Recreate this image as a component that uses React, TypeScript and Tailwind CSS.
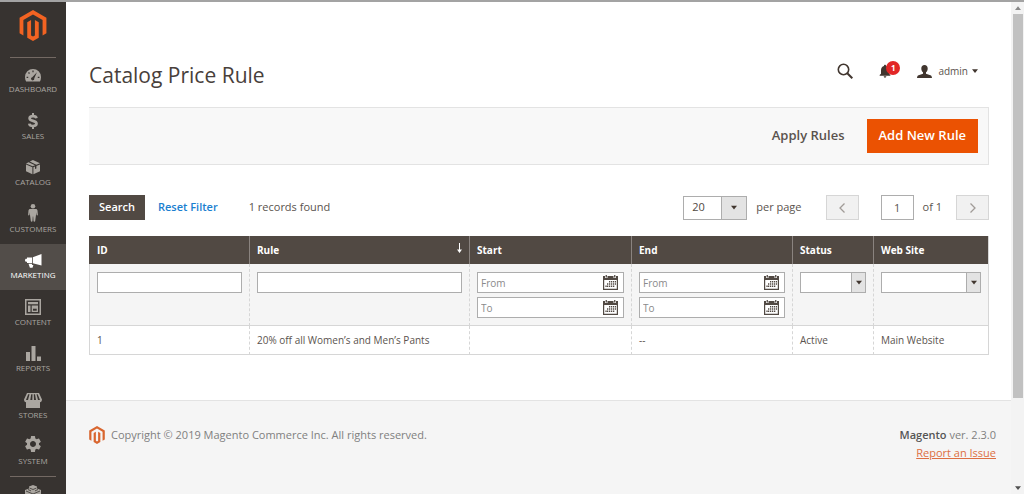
import type { ReactNode } from 'react';
import { FaMagento } from 'react-icons/fa';
import { MdNotifications, MdSettings } from 'react-icons/md';

const DashboardIcon = () => (
  <svg viewBox="0 0 16 13" className="w-4 h-[13px]" fill="currentColor">
    <path
      fillRule="evenodd"
      d="M8 0a8 8 0 0 0-8 8c0 1.700.4 3.200 1.100 4.500h13.800A9 9 0 0 0 16 8a8 8 0 0 0-8-8Zm3.900 3.200-2.700 6.200a1.600 1.600 0 1 1-1.900-1.200ZM7.400 1.600h1.200v1.600H7.400ZM3 3.900l.9-.9 1.100 1.100-.9.9ZM1.600 7.800h1.600V9H1.600Zm11.200 0h1.600V9h-1.600Z"
    />
  </svg>
);

const DollarIcon = () => (
  <svg viewBox="0 0 10 16" className="w-[10px] h-4" fill="none" stroke="currentColor" strokeWidth="2.700">
    <path d="M8.400 5.200C8.200 3.800 7.200 3.100 5 3.100S1.600 3.900 1.600 5.300C1.600 7 3 7.400 5 7.900s3.500 1 3.500 2.700S7.200 13 5 13 1.500 12.200 1.300 10.600" />
    <path d="M5 0v3.300M5 13v3" strokeWidth="2" />
  </svg>
);

const CatalogIcon = () => (
  <svg viewBox="0 0 14 16" className="w-[14px] h-4" fill="currentColor">
    <path d="M0 4.400 2.600 3.200 9 6.200 6.700 7.300ZM3.800 2.600 6.900 1.100 14 4.300 10.300 5.700ZM0 5.400l6.400 2.800V15.300L0 12.200ZM7.400 8.200 9 7.500v2.600l1.400-.7V6.900L14 5.400v6.800l-6.600 3.100Z" />
  </svg>
);

const CustomersIcon = () => (
  <svg viewBox="0 0 10 18" className="w-[10px] h-[18px]" fill="currentColor">
    <circle cx="5" cy="2.300" r="2.300" />
    <path d="M2.200 5h5.600c1 0 1.600.6 1.700 1.500l.4 4.200c0 .9-1.200 1-1.400.1L8 8.300v2.700L7.200 17c-.1.900-1.600.9-1.700 0L5.200 12.500h-.4L4.500 17c-.1.900-1.600.9-1.700 0L2 11V8.300l-.5 2.500c-.2.900-1.400.8-1.400-.1l.4-4.200C.6 5.600 1.200 5 2.200 5Z" />
  </svg>
);

const MarketingIcon = () => (
  <svg viewBox="0 0 17 14" className="w-[17px] h-[14px]" fill="currentColor">
    <path d="M16.500 0v11.500L7.800 9.200V3.300ZM7 3.500v5.500H2V7.800H1.200C.5 7.800 0 7.200 0 6.300s.5-1.500 1.200-1.500H2V3.500ZM3.500 9.800H6.800l.4 1.100h1.200L7.900 12.600l-.4 1.200H4.900Z" />
  </svg>
);

const ContentIcon = () => (
  <svg viewBox="0 0 16 16" className="w-4 h-4" fill="currentColor">
    <path fillRule="evenodd" d="M0 0h16v16H0ZM1.500 1.500v13h13v-13Z" />
    <path d="M3 3h10v2.300H3ZM3 6.500h2.500V13H3ZM6.700 6.500H13V13H6.700Z" />
    <path d="M8 9.700h3.700v2H8Z" fill="#373330" />
  </svg>
);

const ReportsIcon = () => (
  <svg viewBox="0 0 15 15" className="w-[15px] h-[15px]" fill="currentColor">
    <path d="M0 6h4v9H0ZM5.500 0h4v15h-4ZM11 10.500h4V15h-4Z" />
  </svg>
);

const StoresIcon = () => (
  <svg viewBox="0 0 18 15" className="w-[18px] h-[15px]" fill="currentColor">
    <path fillRule="evenodd" d="M3 0h12l3 6.500c0 1.500-.8 2.600-2 2.800V15H2V9.300C.8 9.100 0 8 0 6.500ZM4.200 1.200 2 7h2l1.500-5.800Zm3 0L6.300 7h2l.2-5.800Zm2.600 0L10 7h2L11 1.200Zm2.700 0L14 7h2l-2.300-5.800Z" />
  </svg>
);

const PartnersIcon = () => (
  <svg viewBox="0 0 16 16" className="w-4 h-4" fill="currentColor">
    <path d="M8 0 12 1.600v2L16 5v7l-8 4-8-4V5l4-1.400v-2Z" />
    <path d="M4.500 3 8 4.500 11.500 3M1 6l7 3 7-3M8 9v6M3 4.500l3 1.400M13 4.500l-3 1.400" stroke="#373330" fill="none" strokeWidth=".8" />
  </svg>
);

const CalendarIcon = () => (
  <svg viewBox="0 0 15 15" className="w-[15px] h-[15px]" fill="#514943">
    <path fillRule="evenodd" d="M0 1h2v2h2.500V1h6v2H13V1h2v14H0ZM1.200 5v8.800h12.600V5Z" />
    <path d="M2.600 0h1.300v2.400H2.600ZM11.100 0h1.300v2.400h-1.300Z" />
    <path d="M6 6h1.300v1.500H6ZM8 6h1.300v1.500H8ZM10 6h1.300v1.500H10ZM12 6h1v1.500h-1ZM4 8.200h1.300v1.500H4ZM6 8.200h1.300v1.500H6ZM8 8.200h1.300v1.500H8ZM10 8.200h1.300v1.500H10ZM12 8.200h1v1.500h-1ZM2.400 10.500h1.300V12H2.400ZM4 10.500h1.300V12H4ZM6 10.500h1.300V12H6ZM8 10.500h1.300V12H8ZM10 10.500h1.300V12H10Z" />
  </svg>
);

const CaretDown = ({ className }: { className: string }) => (
  <svg viewBox="0 0 8 5" className={className} fill="currentColor">
    <path d="M0 0h8L4 5Z" />
  </svg>
);

const navItems = [
  { label: 'Dashboard', icon: <DashboardIcon /> },
  { label: 'Sales', icon: <DollarIcon /> },
  { label: 'Catalog', icon: <CatalogIcon /> },
  { label: 'Customers', icon: <CustomersIcon /> },
  { label: 'Marketing', icon: <MarketingIcon />, active: true },
  { label: 'Content', icon: <ContentIcon /> },
  { label: 'Reports', icon: <ReportsIcon /> },
  { label: 'Stores', icon: <StoresIcon /> },
  { label: 'System', icon: <MdSettings className="w-5 h-5" /> },
];

const SelectBox = ({ label, tall, children }: { label: string; tall?: boolean; children?: ReactNode }) => (
  <div className={`relative border border-[#adadad] bg-white ${tall ? 'w-16 h-6' : 'w-full h-[21px]'}`}>
    <select
      aria-label={label}
      className={`block w-full h-full appearance-none bg-transparent text-[#514943] ${tall ? 'pl-2 text-[11px]' : 'pl-1'}`}
    >
      {children}
    </select>
    <span
      className={`absolute inset-y-0 right-0 flex items-center justify-center border-l border-[#adadad] bg-[#e3e3e3] text-[#41362f] pointer-events-none ${tall ? 'w-[25px]' : 'w-[14px]'}`}
    >
      <CaretDown className="w-[6px] h-[5px]" />
    </span>
  </div>
);

const DateField = ({ label, placeholder }: { label: string; placeholder: string }) => (
  <div className="flex items-center h-[21px] border border-[#adadad] bg-white pr-[5px]">
    <input
      type="text"
      aria-label={`${label} ${placeholder}`}
      placeholder={placeholder}
      className="flex-1 min-w-0 h-full pl-[3px] text-[#303030] placeholder:text-[#8a8a8a] outline-none"
    />
    <button type="button" aria-label={`${label} ${placeholder} calendar`}>
      <CalendarIcon />
    </button>
  </div>
);

const TextField = ({ label }: { label: string }) => (
  <input type="text" aria-label={label} className="block w-full h-[21px] px-1 border border-[#adadad] bg-white" />
);

const DateRange = ({ label }: { label: string }) => (
  <div className="flex flex-col gap-1">
    <DateField label={label} placeholder="From" />
    <DateField label={label} placeholder="To" />
  </div>
);

const columns = [
  { title: 'ID', width: 'w-[160px]', filter: <TextField label="ID" />, value: '1' },
  { title: 'Rule', width: '', sorted: true, filter: <TextField label="Rule" />, value: '20% off all Women’s and Men’s Pants' },
  { title: 'Start', width: 'w-[162px]', filter: <DateRange label="Start" />, value: '' },
  { title: 'End', width: 'w-[161px]', filter: <DateRange label="End" />, value: '--' },
  { title: 'Status', width: 'w-[81px]', filter: <SelectBox label="Status" />, value: 'Active' },
  { title: 'Web Site', width: 'w-[115px]', filter: <SelectBox label="Web Site" />, value: 'Main Website' },
];

const Sidebar = () => (
  <nav className="w-[66px] shrink-0 bg-[#373330] text-[#aaa6a0] overflow-hidden">
    <a href="#" aria-label="Magento Admin" className="flex justify-center pt-2 h-[55px] text-[#f26322]">
      <FaMagento className="w-7 h-[31px]" />
    </a>
    <div className="mx-[10px] border-t border-[#736963]" />
    <ul className="grid auto-rows-fr h-[418px]">
      {navItems.map((item) => (
        <li key={item.label}>
          <a
            href="#"
            className={`flex flex-col items-center h-full pb-[10px] ${item.active ? 'bg-[#524d49] text-white' : ''}`}
          >
            <span className="flex flex-1 items-end pb-[2px]">{item.icon}</span>
            <span className="text-[8px] leading-[10px] uppercase">{item.label}</span>
          </a>
        </li>
      ))}
    </ul>
    <div className="mx-[10px] border-t border-[#736963]" />
    <a href="#" aria-label="Find Partners & Extensions" className="flex justify-center pt-2">
      <PartnersIcon />
    </a>
  </nav>
);

const Footer = () => (
  <footer className="flex flex-1 items-start justify-between border-t border-[#e3e3e3] bg-[#f5f5f5] pt-[25px] pl-[23px] pr-[15px] text-[11px] leading-[18px] text-[#808080]">
    <p className="flex items-center gap-[6px]">
      <FaMagento className="w-4 h-[18px] text-[#d9662f]" />
      Copyright © 2019 Magento Commerce Inc. All rights reserved.
    </p>
    <div className="text-right">
      <p>
        <strong className="font-semibold text-[#555]">Magento</strong> ver. 2.3.0
      </p>
      <a href="#" className="text-[#dd6f42] underline">
        Report an Issue
      </a>
    </div>
  </footer>
);

const App = () => {
  return (
    <div className="flex h-screen overflow-hidden border-t-2 border-[#a3a3a3] bg-white font-['Open_Sans',sans-serif] text-[#5a534e]">
      <Sidebar />

      <main className="flex flex-1 min-w-0 flex-col">
        <div className="pl-[23px] pr-[22px] pb-[45px]">
          {/* Page header */}
          <header className="flex items-center justify-between pt-14 pb-[15px]">
            <h1 className="text-[21px] leading-[34px] text-[#48403b]">Catalog Price Rule</h1>
            <div className="flex items-center pr-[11px] pb-2">
              <button type="button" aria-label="Search" className="mr-6 text-[#41362f]">
                <svg viewBox="0 0 16 16" className="w-4 h-4" fill="none" stroke="currentColor" strokeWidth="1.600">
                  <circle cx="6.500" cy="6.500" r="5.200" />
                  <path d="m10.300 10.300 5 5" strokeWidth="2" />
                </svg>
              </button>
              <button type="button" aria-label="Notifications" className="relative mr-6 text-[#41362f]">
                <MdNotifications className="w-4 h-4" />
                <span className="absolute -top-[2px] left-[9px] flex items-center justify-center w-[14px] h-[14px] rounded-full bg-[#e22626] text-[8px] font-bold text-white">
                  1
                </span>
              </button>
              <button type="button" className="flex items-center text-[10px]">
                <svg viewBox="0 0 15 13" className="w-[15px] h-[13px] mr-[6px]" fill="#41362f">
                  <path d="M7.500 0c2 0 3.200 1.300 3.200 3.400 0 1.700-.7 3.100-1.700 3.900v1.400l4.400 1.500c1 .4 1.500 1.100 1.600 2.800H0c.1-1.700.6-2.400 1.600-2.800L6 8.700V7.300C5 6.500 4.300 5.100 4.300 3.400 4.300 1.300 5.500 0 7.500 0Z" />
                </svg>
                admin
                <CaretDown className="w-[6px] h-1 ml-1 text-[#41362f]" />
              </button>
            </div>
          </header>

          {/* Page actions */}
          <div className="flex items-center justify-end gap-[22px] h-[58px] pr-[10px] border border-[#e3e3e3] border-l-0 bg-[#f8f8f8] text-[13px] font-semibold">
            <button type="button">Apply Rules</button>
            <button type="button" className="h-[34px] px-3 bg-[#eb5202] text-white">
              Add New Rule
            </button>
          </div>

          {/* Grid controls */}
          <div className="flex items-center justify-between mt-[30px] mb-4 text-[11px]">
            <div className="flex items-center">
              <button type="button" className="h-[25px] px-[10px] bg-[#514943] font-semibold text-white">
                Search
              </button>
              <button type="button" className="ml-[13px] font-semibold text-[#1a80d0]">
                Reset Filter
              </button>
              <span className="ml-[31px]">1 records found</span>
            </div>
            <div className="flex items-center">
              <SelectBox label="Records per page" tall>
                <option>20</option>
              </SelectBox>
              <span className="ml-[9px] mr-6">per page</span>
              <button
                type="button"
                aria-label="Previous page"
                className="flex items-center justify-center w-[33px] h-[25px] border border-[#d6d6d6] bg-[#f1f1f1] text-[#a09b97]"
              >
                <svg viewBox="0 0 6 10" className="w-[6px] h-[10px]" fill="none" stroke="currentColor" strokeWidth="1.300">
                  <path d="M5.500.5 1 5l4.500 4.500" />
                </svg>
              </button>
              <input
                type="text"
                aria-label="Page"
                defaultValue="1"
                className="w-[33px] h-[25px] ml-[22px] border border-[#adadad] text-center"
              />
              <span className="ml-[9px] mr-[14px]">of 1</span>
              <button
                type="button"
                aria-label="Next page"
                className="flex items-center justify-center w-[33px] h-[25px] border border-[#d6d6d6] bg-[#f1f1f1] text-[#a09b97]"
              >
                <svg viewBox="0 0 6 10" className="w-[6px] h-[10px]" fill="none" stroke="currentColor" strokeWidth="1.300">
                  <path d="M.5.500 5 5 .5 9.500" />
                </svg>
              </button>
            </div>
          </div>

          {/* Rules grid */}
          <table className="w-full table-fixed border-separate border-spacing-0 border-r border-[#d6d6d6] text-[10px] text-left">
            <thead>
              <tr className="bg-[#514943] text-white">
                {columns.map((col) => (
                  <th
                    key={col.title}
                    className={`h-7 px-[7px] border-l border-[#8a837f] first:border-[#514943] font-bold ${col.width}`}
                  >
                    <div className="flex items-center justify-between">
                      {col.title}
                      {col.sorted && (
                        <svg viewBox="0 0 5 10" className="w-[5px] h-[10px] -mt-1" fill="white">
                          <path d="M2 0h1v6.500h2L2.500 10 0 6.500h2Z" />
                        </svg>
                      )}
                    </div>
                  </th>
                ))}
              </tr>
            </thead>
            <tbody>
              <tr className="bg-[#f5f5f5]">
                {columns.map((col) => (
                  <td
                    key={col.title}
                    className="px-[7px] pt-2 pb-[7px] align-top border-l border-b border-[#d6d6d6] [border-left-style:dashed] first:[border-left-style:solid]"
                  >
                    {col.filter}
                  </td>
                ))}
              </tr>
              <tr>
                {columns.map((col) => (
                  <td
                    key={col.title}
                    className="h-[29px] px-[7px] border-l border-b border-[#d6d6d6] [border-left-style:dashed] first:[border-left-style:solid]"
                  >
                    {col.value}
                  </td>
                ))}
              </tr>
            </tbody>
          </table>
        </div>

        <Footer />
      </main>

      {/* Scrollbar */}
      <div className="flex w-[13px] shrink-0 flex-col items-center justify-between bg-[#f3f3f3] pb-1">
        <div className="flex flex-col items-center w-full">
          <CaretDown className="w-[6px] h-1 mt-1 mb-1 rotate-180 text-[#888]" />
          <div className="w-[10px] h-[384px] bg-[#c1c1c1]" />
        </div>
        <CaretDown className="w-[6px] h-1 text-[#505050]" />
      </div>
    </div>
  );
};

export default App;
